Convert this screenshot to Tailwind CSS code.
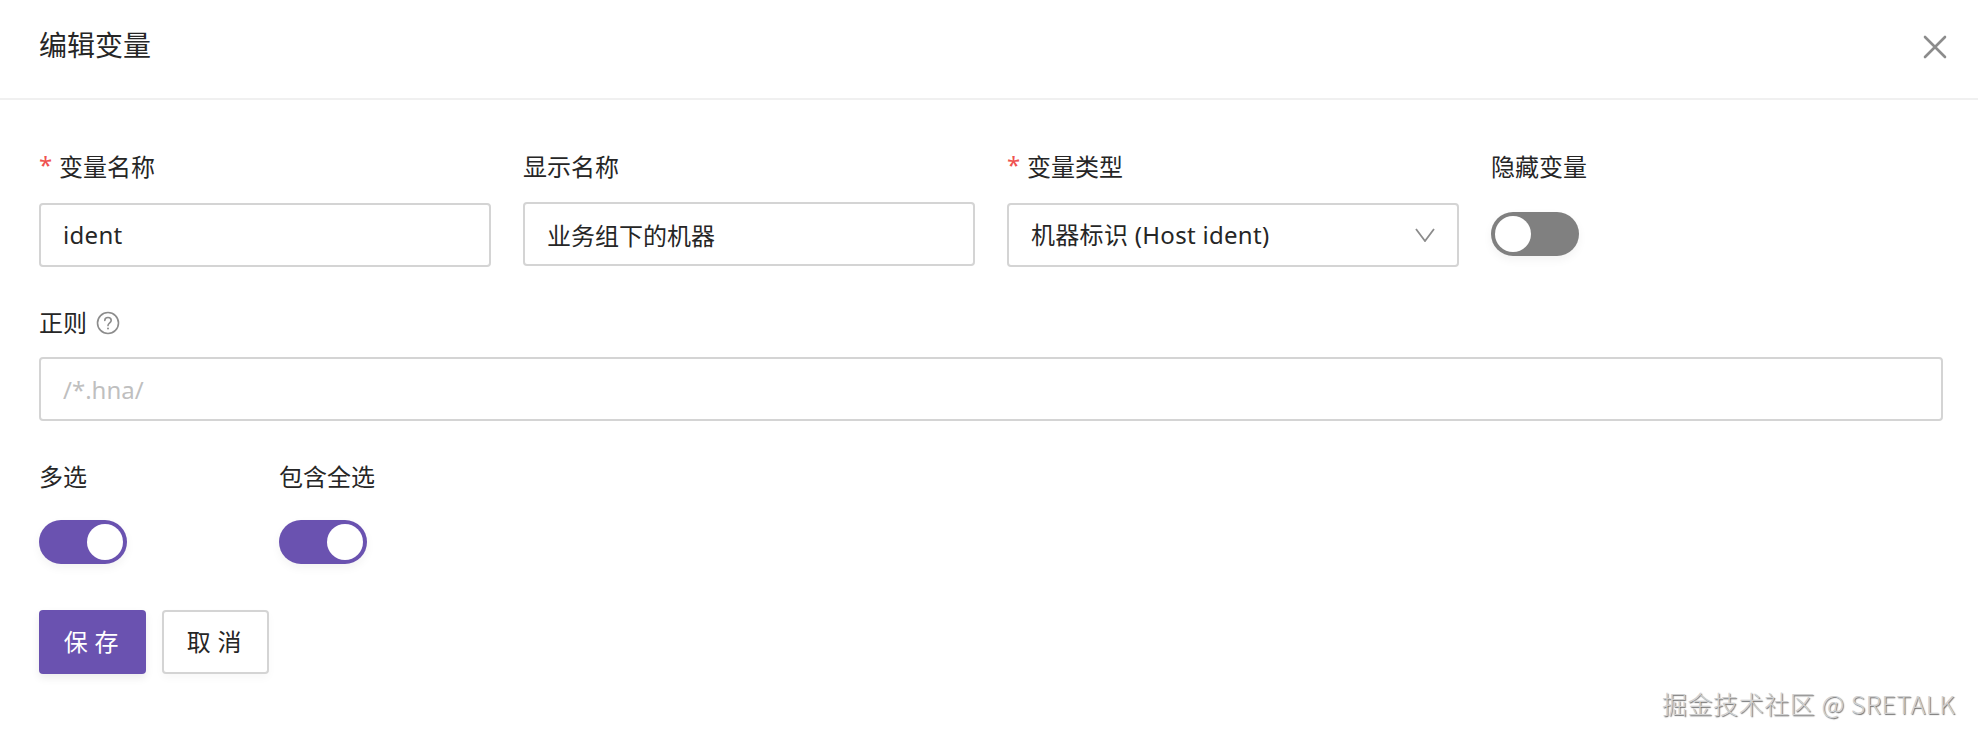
<!DOCTYPE html>
<html lang="zh-CN">
<head>
  <meta charset="UTF-8" />
  <title>编辑变量</title>
  <script src="https://cdn.jsdelivr.net/npm/@tailwindcss/browser@4"></script>
</head>
<body class="relative h-[740px] w-[1978px] overflow-hidden bg-white text-[#262626] font-['Noto_Sans','Noto_Sans_CJK_SC',sans-serif]">

  <!-- header -->
  <div class="flex h-[100px] items-center justify-between border-b-2 border-[#f0f0f0] pl-[39px] pr-[31px] pb-[5px]">
    <div class="text-[28px] leading-[36px] -mt-[3px]">编辑变量</div>
    <svg class="w-[24px] h-[24px] text-[#8c8c8c]" viewBox="0 0 24 24" fill="none" stroke="currentColor" stroke-width="2.6" stroke-linecap="round">
      <path d="M2 2 L22 22 M22 2 L2 22" />
    </svg>
  </div>

  <div class="w-[1904px] ml-[39px] pt-[48px]">
    <!-- first row -->
    <div class="grid grid-cols-4 gap-x-8">
      <div>
        <label class="flex items-center h-[38px] text-[24px] leading-[38px]"><span class="text-[#ef5350] w-[20px] text-[24px] leading-[30px] -mt-[4px]">*</span>变量名称</label>
        <input value="ident" class="mt-[17px] block h-[64px] w-full rounded-[4px] border-2 border-[#d4d4d4] pl-[22px] pb-[2px] text-[24px] tracking-[0.3px] outline-none" />
      </div>
      <div>
        <label class="flex items-center h-[38px] text-[24px] leading-[38px]">显示名称</label>
        <input value="业务组下的机器" class="mt-[16px] block h-[64px] w-full rounded-[4px] border-2 border-[#d4d4d4] pl-[22px] text-[24px] outline-none" />
      </div>
      <div>
        <label class="flex items-center h-[38px] text-[24px] leading-[38px]"><span class="text-[#ef5350] w-[20px] text-[24px] leading-[30px] -mt-[4px]">*</span>变量类型</label>
        <div class="mt-[17px] flex h-[64px] items-center justify-between rounded-[4px] border-2 border-[#d4d4d4] px-[22px] text-[24px]">
          <span class="tracking-[0.3px]">机器标识 (Host ident)</span>
          <svg class="w-[20px] h-[14px] text-[#8c8c8c]" viewBox="0 0 20 14" fill="none" stroke="currentColor" stroke-width="1.8">
            <path d="M1 1 L10 13 L19 1" />
          </svg>
        </div>
      </div>
      <div>
        <label class="flex items-center h-[38px] text-[24px] leading-[38px]">隐藏变量</label>
        <div class="mt-[26px] flex h-[44px] w-[88px] items-center rounded-full bg-[#808080] pl-[4px] shadow-[0_4px_10px_rgba(0,0,0,0.05)]">
          <span class="h-[36px] w-[36px] rounded-full bg-white"></span>
        </div>
      </div>
    </div>

    <!-- regex -->
    <div class="mt-[37px]">
      <label class="flex items-center h-[38px] text-[24px] leading-[38px]">正则
        <svg class="ml-[9px] w-[24px] h-[24px] text-[#8c8c8c]" viewBox="0 0 24 24" fill="none" stroke="currentColor" stroke-width="1.6">
          <circle cx="12" cy="12" r="10.5" />
          <path d="M8.8 9.4 C8.8 5.6 15.2 5.6 15.2 9.4 C15.2 11.8 12 11.8 12 14.6" stroke-linecap="round" />
          <circle cx="12" cy="17.6" r="1" fill="currentColor" stroke="none" />
        </svg>
      </label>
      <input placeholder="/*.hna/" class="mt-[15px] block h-[64px] w-full rounded-[4px] border-2 border-[#d4d4d4] pl-[22px] text-[24px] outline-none placeholder:text-[#bfbfbf]" />
    </div>

    <!-- switches -->
    <div class="mt-[37px] flex">
      <div class="w-[240px]">
        <label class="flex items-center h-[38px] text-[24px] leading-[38px]">多选</label>
        <div class="mt-[24px] flex h-[44px] w-[88px] items-center justify-end rounded-full bg-[#6a52b0] pr-[4px] shadow-[0_4px_10px_rgba(0,0,0,0.05)]">
          <span class="h-[36px] w-[36px] rounded-full bg-white"></span>
        </div>
      </div>
      <div>
        <label class="flex items-center h-[38px] text-[24px] leading-[38px]">包含全选</label>
        <div class="mt-[24px] flex h-[44px] w-[88px] items-center justify-end rounded-full bg-[#6a52b0] pr-[4px] shadow-[0_4px_10px_rgba(0,0,0,0.05)]">
          <span class="h-[36px] w-[36px] rounded-full bg-white"></span>
        </div>
      </div>
    </div>

    <!-- buttons -->
    <div class="mt-[46px] flex gap-4">
      <button class="h-[64px] w-[107px] rounded-[4px] bg-[#6a52b0] pl-[4px] text-[24px] tracking-[0.28em] text-white shadow-[0_4px_8px_rgba(0,0,0,0.08)]">保存</button>
      <button class="h-[64px] w-[107px] rounded-[4px] border-2 border-[#d4d4d4] bg-white pl-[4px] text-[24px] tracking-[0.28em] shadow-[0_4px_8px_rgba(0,0,0,0.03)]">取消</button>
    </div>
  </div>

  <!-- watermark -->
  <div class="absolute left-[1662px] top-[685px] whitespace-nowrap font-['Noto_Sans_CJK_SC',sans-serif] text-[25px] leading-[36px] font-light tracking-[0.55px] text-[#d0d0d0] [text-shadow:1px_1px_1px_rgba(50,50,50,0.7)]">掘金技术社区 @ SRETALK</div>
</body>
</html>
